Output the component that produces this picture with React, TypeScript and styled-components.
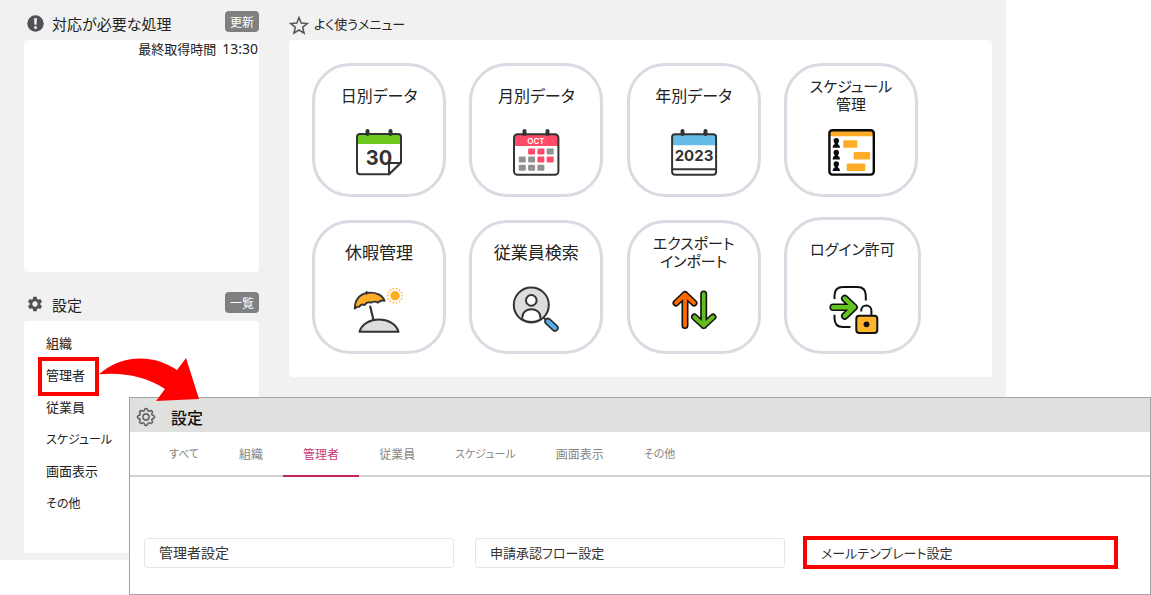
import React from "react";
import styled, { createGlobalStyle, css } from "styled-components";
import { MdSettings } from "react-icons/md";
import { BsGear } from "react-icons/bs";

const GlobalStyle = createGlobalStyle`
  *, *::before, *::after { box-sizing: border-box; }
  body {
    margin: 0;
    background: #fff;
    color: #222;
    font-family: "Noto Sans CJK JP", "Noto Sans", sans-serif;
    font-feature-settings: "palt";
  }
  h1, h2, p, ul { margin: 0; padding: 0; }
  ul { list-style: none; }
  a { color: inherit; text-decoration: none; }
  button { font: inherit; font-feature-settings: inherit; }
`;

const Page = styled.div`
  position: relative;
  padding-bottom: 35px;
`;

const Dashboard = styled.main`
  display: flex;
  gap: 30px;
  margin-right: 145px;
  padding: 0 14px 7px 24px;
  background: #f1f1f1;
`;

const Sidebar = styled.div`
  display: flex;
  flex: none;
  flex-direction: column;
  gap: 9px;
  width: 235px;
`;

const MainColumn = styled.section`
  flex: 1;
  min-width: 0;
`;

const SectionHead = styled.header<{ $lead: number; $gap: number }>`
  display: flex;
  align-items: flex-end;
  gap: ${(p) => p.$gap}px;
  height: 40px;
  padding: 0 0 8px ${(p) => p.$lead}px;

  svg { flex: none; display: block; }
`;

const SectionTitle = styled.h2<{ $size?: number }>`
  flex: 1;
  font-size: ${(p) => p.$size ?? 15}px;
  font-weight: 400;
  line-height: 16px;
`;

const SmallButton = styled.button`
  width: 34px;
  height: 21px;
  padding: 0;
  border: 0;
  border-radius: 4px;
  background: #808080;
  color: #fff;
  font-size: 12px;
  line-height: 20px;
`;

const SidePanel = styled.div`
  height: 232px;
  border-radius: 4px;
  background: #fff;
`;

const FetchTime = styled.p`
  font-size: 13px;
  line-height: 18px;
  text-align: right;
`;

const Clock = styled.time`
  margin: 0 1px 0 6px;
  font-family: "Noto Sans", sans-serif;
  font-size: 14px;
`;

const SideMenu = styled.ul`
  padding: 6px 22px;
  font-size: 13px;
  line-height: 32px;

  li { height: 32px; }
`;

const redFrame = css`
  position: relative;

  &::after {
    content: "";
    position: absolute;
    border: 4px solid #f00;
    pointer-events: none;
  }
`;

const SideLink = styled.a<{ $kana: boolean; $marked: boolean }>`
  display: inline-block;
  font-size: ${(p) => (p.$kana ? 12 : 13)}px;
  ${(p) => p.$marked && redFrame}
  &::after { inset: -2px -14px -5px -8px; }
`;

const MenuPanel = styled.div`
  padding: 23px;
  border-radius: 4px;
  background: #fff;
`;

const MenuGrid = styled.div`
  display: grid;
  grid-template-columns: repeat(4, 134px);
  grid-auto-rows: 134px;
  justify-content: space-between;
  row-gap: 23px;
  max-width: 606px;
`;

const MenuCard = styled.a<{ $large?: boolean }>`
  display: flex;
  flex-direction: column;
  align-items: center;
  align-self: end;
  gap: 15px;
  width: ${(p) => (p.$large ? 137 : 134)}px;
  height: ${(p) => (p.$large ? 137 : 134)}px;
  padding-top: 11px;
  border: 3px solid #d8dce2;
  border-radius: 38px;

  svg { display: block; overflow: visible; }
`;

const CardLabel = styled.span`
  display: flex;
  flex-direction: column;
  align-items: center;
  justify-content: center;
  height: 36px;
  line-height: 18px;
  white-space: nowrap;
`;

const LabelLine = styled.span<{ $size: number }>`
  height: 18px;
  font-size: ${(p) => p.$size}px;
`;

const SettingsWindow = styled.section`
  position: absolute;
  top: 397px;
  right: 0;
  left: 129px;
  border: 1px solid #a3a3a3;
  background: #fff;
`;

const WindowHead = styled.header`
  display: flex;
  align-items: center;
  gap: 16px;
  height: 34px;
  padding: 4px 7px 0;
  background: #e0e0de;
  color: #555;

  svg { stroke: currentColor; stroke-width: 0.3; overflow: visible; }
`;

const WindowTitle = styled.h1`
  color: #111;
  font-size: 16px;
  font-weight: 500;
  line-height: 20px;
`;

const Tabs = styled.nav`
  display: flex;
  height: 45px;
  padding-left: 19px;
  border-bottom: 2px solid #d3d3d3;
`;

const Tab = styled.a<{ $kana: boolean; $active: boolean }>`
  height: 45px;
  padding: 0 20px;
  border-bottom: 2px solid ${(p) => (p.$active ? "#c2255f" : "transparent")};
  color: ${(p) => (p.$active ? "#c63d72" : "#858585")};
  font-size: ${(p) => (p.$kana ? 11 : 12)}px;
  line-height: 43px;
  white-space: nowrap;
`;

const SettingGrid = styled.div`
  display: grid;
  grid-template-columns: repeat(3, 1fr);
  gap: 21px;
  padding: 61px 34px 26px 14px;
`;

const SettingLink = styled.a<{ $kana: boolean; $marked: boolean }>`
  height: 30px;
  padding-left: 14px;
  border: 1px solid #e6e6e6;
  border-radius: 3px;
  color: #333;
  font-size: ${(p) => (p.$kana ? 13 : 14)}px;
  line-height: 27px;
  ${(p) => p.$marked && redFrame}
  &::after { inset: -3px -3px -2px -4px; }
`;

const PointerArrow = styled.svg`
  position: absolute;
  top: 357px;
  left: 99px;
`;

const INK = "#333";

const Icon = ({ children }: { children: React.ReactNode }) => (
  <svg width="48" height="48" viewBox="0 0 48 48" fill="none" aria-hidden="true">
    {children}
  </svg>
);

const Pins = () => (
  <path d="M12.5 3V6M35.5 3V6" stroke={INK} strokeWidth="4" strokeLinecap="round" />
);

const DayIcon = () => (
  <Icon>
    <path d="M2 16H46V9Q46 6 43 6H5Q2 6 2 9Z" fill="#6cc71e" />
    <path
      d="M34 46.2H5Q2 46.2 2 43.2V9Q2 6 5 6H43Q46 6 46 9V34.5L34 46.2V35H45.5"
      stroke={INK}
      strokeWidth="2"
      strokeLinejoin="round"
    />
    <text x="24" y="36.5" textAnchor="middle" fill={INK} fontFamily="Inter" fontSize="20" fontWeight="700">30</text>
    <path d="M34 46.2V35H45.5Z" fill="#fff" stroke={INK} strokeWidth="2" strokeLinejoin="round" />
    <Pins />
  </Icon>
);

const monthCells: [number, number, boolean][] = [
  [1, 0, true], [2, 0, true], [3, 0, false],
  [0, 1, false], [1, 1, false], [2, 1, true], [3, 1, true],
  [0, 2, false], [1, 2, false], [2, 2, false],
];

const MonthIcon = () => (
  <Icon>
    <path d="M2 18H46V9Q46 6 43 6H5Q2 6 2 9Z" fill="#ff4b69" />
    <rect x="2" y="6.2" width="44.4" height="40.6" rx="3.5" stroke={INK} strokeWidth="2" />
    <text x="24" y="16" textAnchor="middle" fill="#fff" fontFamily="Inter" fontSize="8" fontWeight="600">OCT</text>
    {monthCells.map(([c, r, hot]) => (
      <rect
        key={`${c}-${r}`}
        x={6.8 + c * 9.3}
        y={20.4 + r * 8.2}
        width="7"
        height="6"
        rx="1"
        fill={hot ? "#ff4b69" : "#929292"}
      />
    ))}
    <Pins />
  </Icon>
);

const YearIcon = () => (
  <Icon>
    <path d="M2 17.3H46V9Q46 6 43 6H5Q2 6 2 9Z" fill="#66bce8" />
    <rect x="2.1" y="6.2" width="44" height="40.6" rx="3" stroke={INK} strokeWidth="2" />
    <path d="M2 41.2H46" stroke={INK} strokeWidth="2" />
    <text x="24" y="33.3" textAnchor="middle" fill={INK} fontFamily="Inter" fontSize="15" fontWeight="700">2023</text>
    <Pins />
  </Icon>
);

const ScheduleIcon = () => (
  <Icon>
    <path d="M2 8.2H47V3H2Z" fill="#ffad27" />
    <rect x="2.4" y="2.2" width="44.4" height="44.4" rx="3" stroke="#0a0a0a" strokeWidth="2.4" />
    {[10, 21.6, 33.2].map((y) => (
      <g key={y} fill="#0a0a0a">
        <circle cx="9.3" cy={y + 2.8} r="2.7" />
        <path d={`M7.4 ${y + 4.5}H11.2L10.8 ${y + 6}Q13 ${y + 7} 13 ${y + 9.8}H5.6Q5.6 ${y + 7} 7.8 ${y + 6}Z`} />
      </g>
    ))}
    <g fill="#ffad27">
      <rect x="16.3" y="12.3" width="14" height="7.4" rx="1" />
      <rect x="26.7" y="24" width="16.4" height="7.4" rx="1" />
      <rect x="19.7" y="35.6" width="18.6" height="7.4" rx="1" />
    </g>
  </Icon>
);

const VacationIcon = () => (
  <Icon>
    <path
      d="M-.2 23.6C-.4 15 5 9 12 8C20 6.6 27.5 10 29.6 15.8Q25.6 14.8 23 17.7Q19.5 15.6 16 17.7Q12 16.2 9.7 20Q6 18.5 4.3 21.7Q1.8 21.3 -.2 23.6Z"
      fill="#ffad27"
      stroke={INK}
      strokeWidth="1.9"
      strokeLinejoin="round"
    />
    <path d="M11.6 7.2V8.5M15.2 21.5L18.5 35" stroke={INK} strokeWidth="2.2" strokeLinecap="round" />
    <path d="M4.5 46.8C9 30.5 39 30.5 43.5 46.8Z" fill="#ddd" stroke={INK} strokeWidth="2" strokeLinejoin="round" />
    <circle cx="40" cy="10.7" r="4.7" fill="#ffad27" />
    <circle
      cx="40"
      cy="10.7"
      r="7.2"
      stroke="#ffad27"
      strokeWidth="1.6"
      strokeLinecap="round"
      pathLength="14"
      strokeDasharray="0.01 0.99"
    />
  </Icon>
);

const SearchIcon = () => (
  <Icon>
    <circle cx="19.3" cy="20" r="17.5" fill="#ddd" />
    <path d="M10.3 34.5V32.5C10.3 21.5 28.5 21.5 28.5 32.5V34.5Q19.5 39.5 10.3 34.5Z" fill="#fff" stroke={INK} strokeWidth="1.9" />
    <circle cx="19.3" cy="15.4" r="5.3" fill="#fff" stroke={INK} strokeWidth="2" />
    <circle cx="19.3" cy="20" r="17.5" stroke={INK} strokeWidth="2" />
    <path d="M31.5 32.5L36 37" stroke={INK} strokeWidth="2" />
    <path d="M36 36.5L43 43" stroke={INK} strokeWidth="7.5" strokeLinecap="round" />
    <path d="M36 36.5L43 43" stroke="#56b4ea" strokeWidth="4" strokeLinecap="round" />
  </Icon>
);

const Outlined = ({ d, color, inner, outer }: { d: string; color: string; inner: number; outer: number }) => (
  <g strokeLinecap="round" strokeLinejoin="round">
    <path d={d} stroke="#111" strokeWidth={outer} />
    <path d={d} stroke={color} strokeWidth={inner} />
  </g>
);

const TransferIcon = () => (
  <Icon>
    <Outlined d="M15 40.5V9.5M6 18L15 9.5L24 18" color="#ff6a00" inner={3.8} outer={7} />
    <Outlined d="M33.7 9V40.5M24.5 32L33.7 40.5L43 32" color="#63bd20" inner={3.8} outer={7} />
  </Icon>
);

const LoginIcon = () => (
  <Icon>
    <path
      d="M6.5 17V13.5Q6.5 4.9 15 4.9H29.5Q37.8 4.9 37.8 13.5V18.5M6.5 32.7V36Q6.5 45 15 45H22.5"
      stroke="#111"
      strokeWidth="2"
    />
    <Outlined d="M5.2 25.2H26M16.8 16.5L26 25.2L16.8 34" color="#63c51e" inner={4.4} outer={7.6} />
    <path d="M33.2 29.5V28.5A5.1 5.1 0 0 1 43.4 28.5V34" stroke="#111" strokeWidth="2" />
    <rect x="28.3" y="33.8" width="21" height="17.2" rx="3" fill="#ffb42c" stroke="#111" strokeWidth="2" />
    <circle cx="38.5" cy="42.3" r="2.9" fill="#111" />
  </Icon>
);

const hasKana = (text: string) => /[\u3040-\u30ff]/.test(text);

const sideItems = ["組織", "管理者", "従業員", "スケジュール", "画面表示", "その他"];
const tabItems = ["すべて", ...sideItems];
const settingItems = ["管理者設定", "申請承認フロー設定", "メールテンプレート設定"];

const menuItems = [
  { lines: ["日別データ"], size: 16, icon: <DayIcon /> },
  { lines: ["月別データ"], size: 16, icon: <MonthIcon /> },
  { lines: ["年別データ"], size: 16, icon: <YearIcon /> },
  { lines: ["スケジュール", "管理"], size: 15, icon: <ScheduleIcon /> },
  { lines: ["休暇管理"], size: 17, icon: <VacationIcon /> },
  { lines: ["従業員検索"], size: 17, icon: <SearchIcon /> },
  { lines: ["エクスポート", "インポート"], size: 15, icon: <TransferIcon /> },
  { lines: ["ログイン許可"], size: 15, icon: <LoginIcon />, large: true },
];

export default function App() {
  return (
    <>
      <GlobalStyle />
      <Page>
        <Dashboard>
          <Sidebar>
            <section>
              <SectionHead $lead={3} $gap={8}>
                <svg width="17" height="17" viewBox="0 0 17 17" aria-hidden="true">
                  <circle cx="8.5" cy="8.5" r="8.2" fill="#505258" />
                  <path d="M7 3.2H10L9.6 9.8H7.4Z" fill="#f1f1f1" />
                  <circle cx="8.5" cy="12.4" r="1.5" fill="#f1f1f1" />
                </svg>
                <SectionTitle>対応が必要な処理</SectionTitle>
                <SmallButton type="button">更新</SmallButton>
              </SectionHead>
              <SidePanel>
                <FetchTime>最終取得時間<Clock>13:30</Clock></FetchTime>
              </SidePanel>
            </section>
            <section>
              <SectionHead $lead={2} $gap={8}>
                <MdSettings size={18} color="#505258" />
                <SectionTitle>設定</SectionTitle>
                <SmallButton type="button">一覧</SmallButton>
              </SectionHead>
              <SidePanel>
                <SideMenu>
                  {sideItems.map((t) => (
                    <li key={t}>
                      <SideLink href="#" $kana={hasKana(t)} $marked={t === "管理者"}>{t}</SideLink>
                    </li>
                  ))}
                </SideMenu>
              </SidePanel>
            </section>
          </Sidebar>
          <MainColumn>
            <SectionHead $lead={1} $gap={6}>
              <svg width="18" height="16" viewBox="0 0 18 16" fill="none" overflow="visible" aria-hidden="true">
                <path
                  d="M9 1.5L11.2 7.1L17.2 7.5L12.6 11.3L14.1 17.2L9 14L3.9 17.2L5.4 11.3L.8 7.5L6.8 7.1Z"
                  stroke="#555"
                  strokeWidth="1.5"
                />
              </svg>
              <SectionTitle $size={13}>よく使うメニュー</SectionTitle>
            </SectionHead>
            <MenuPanel>
              <MenuGrid>
                {menuItems.map((m) => (
                  <MenuCard key={m.lines[0]} href="#" $large={m.large}>
                    <CardLabel>
                      {m.lines.map((l) => (
                        <LabelLine key={l} $size={m.size}>{l}</LabelLine>
                      ))}
                    </CardLabel>
                    {m.icon}
                  </MenuCard>
                ))}
              </MenuGrid>
            </MenuPanel>
          </MainColumn>
        </Dashboard>

        <SettingsWindow>
          <WindowHead>
            <BsGear size={18} />
            <WindowTitle>設定</WindowTitle>
          </WindowHead>
          <Tabs>
            {tabItems.map((t) => (
              <Tab key={t} href="#" $kana={hasKana(t)} $active={t === "管理者"}>{t}</Tab>
            ))}
          </Tabs>
          <SettingGrid>
            {settingItems.map((t) => (
              <SettingLink key={t} href="#" $kana={hasKana(t)} $marked={t === "メールテンプレート設定"}>
                {t}
              </SettingLink>
            ))}
          </SettingGrid>
        </SettingsWindow>

        <PointerArrow width="102" height="46" viewBox="0 0 102 46" aria-hidden="true">
          <path d="M0 17.3C21 -2 53 -4 78 13L87 1L100 42L57 44L66 32C47 19 23 15 0 17.3Z" fill="#f00" />
        </PointerArrow>
      </Page>
    </>
  );
}
